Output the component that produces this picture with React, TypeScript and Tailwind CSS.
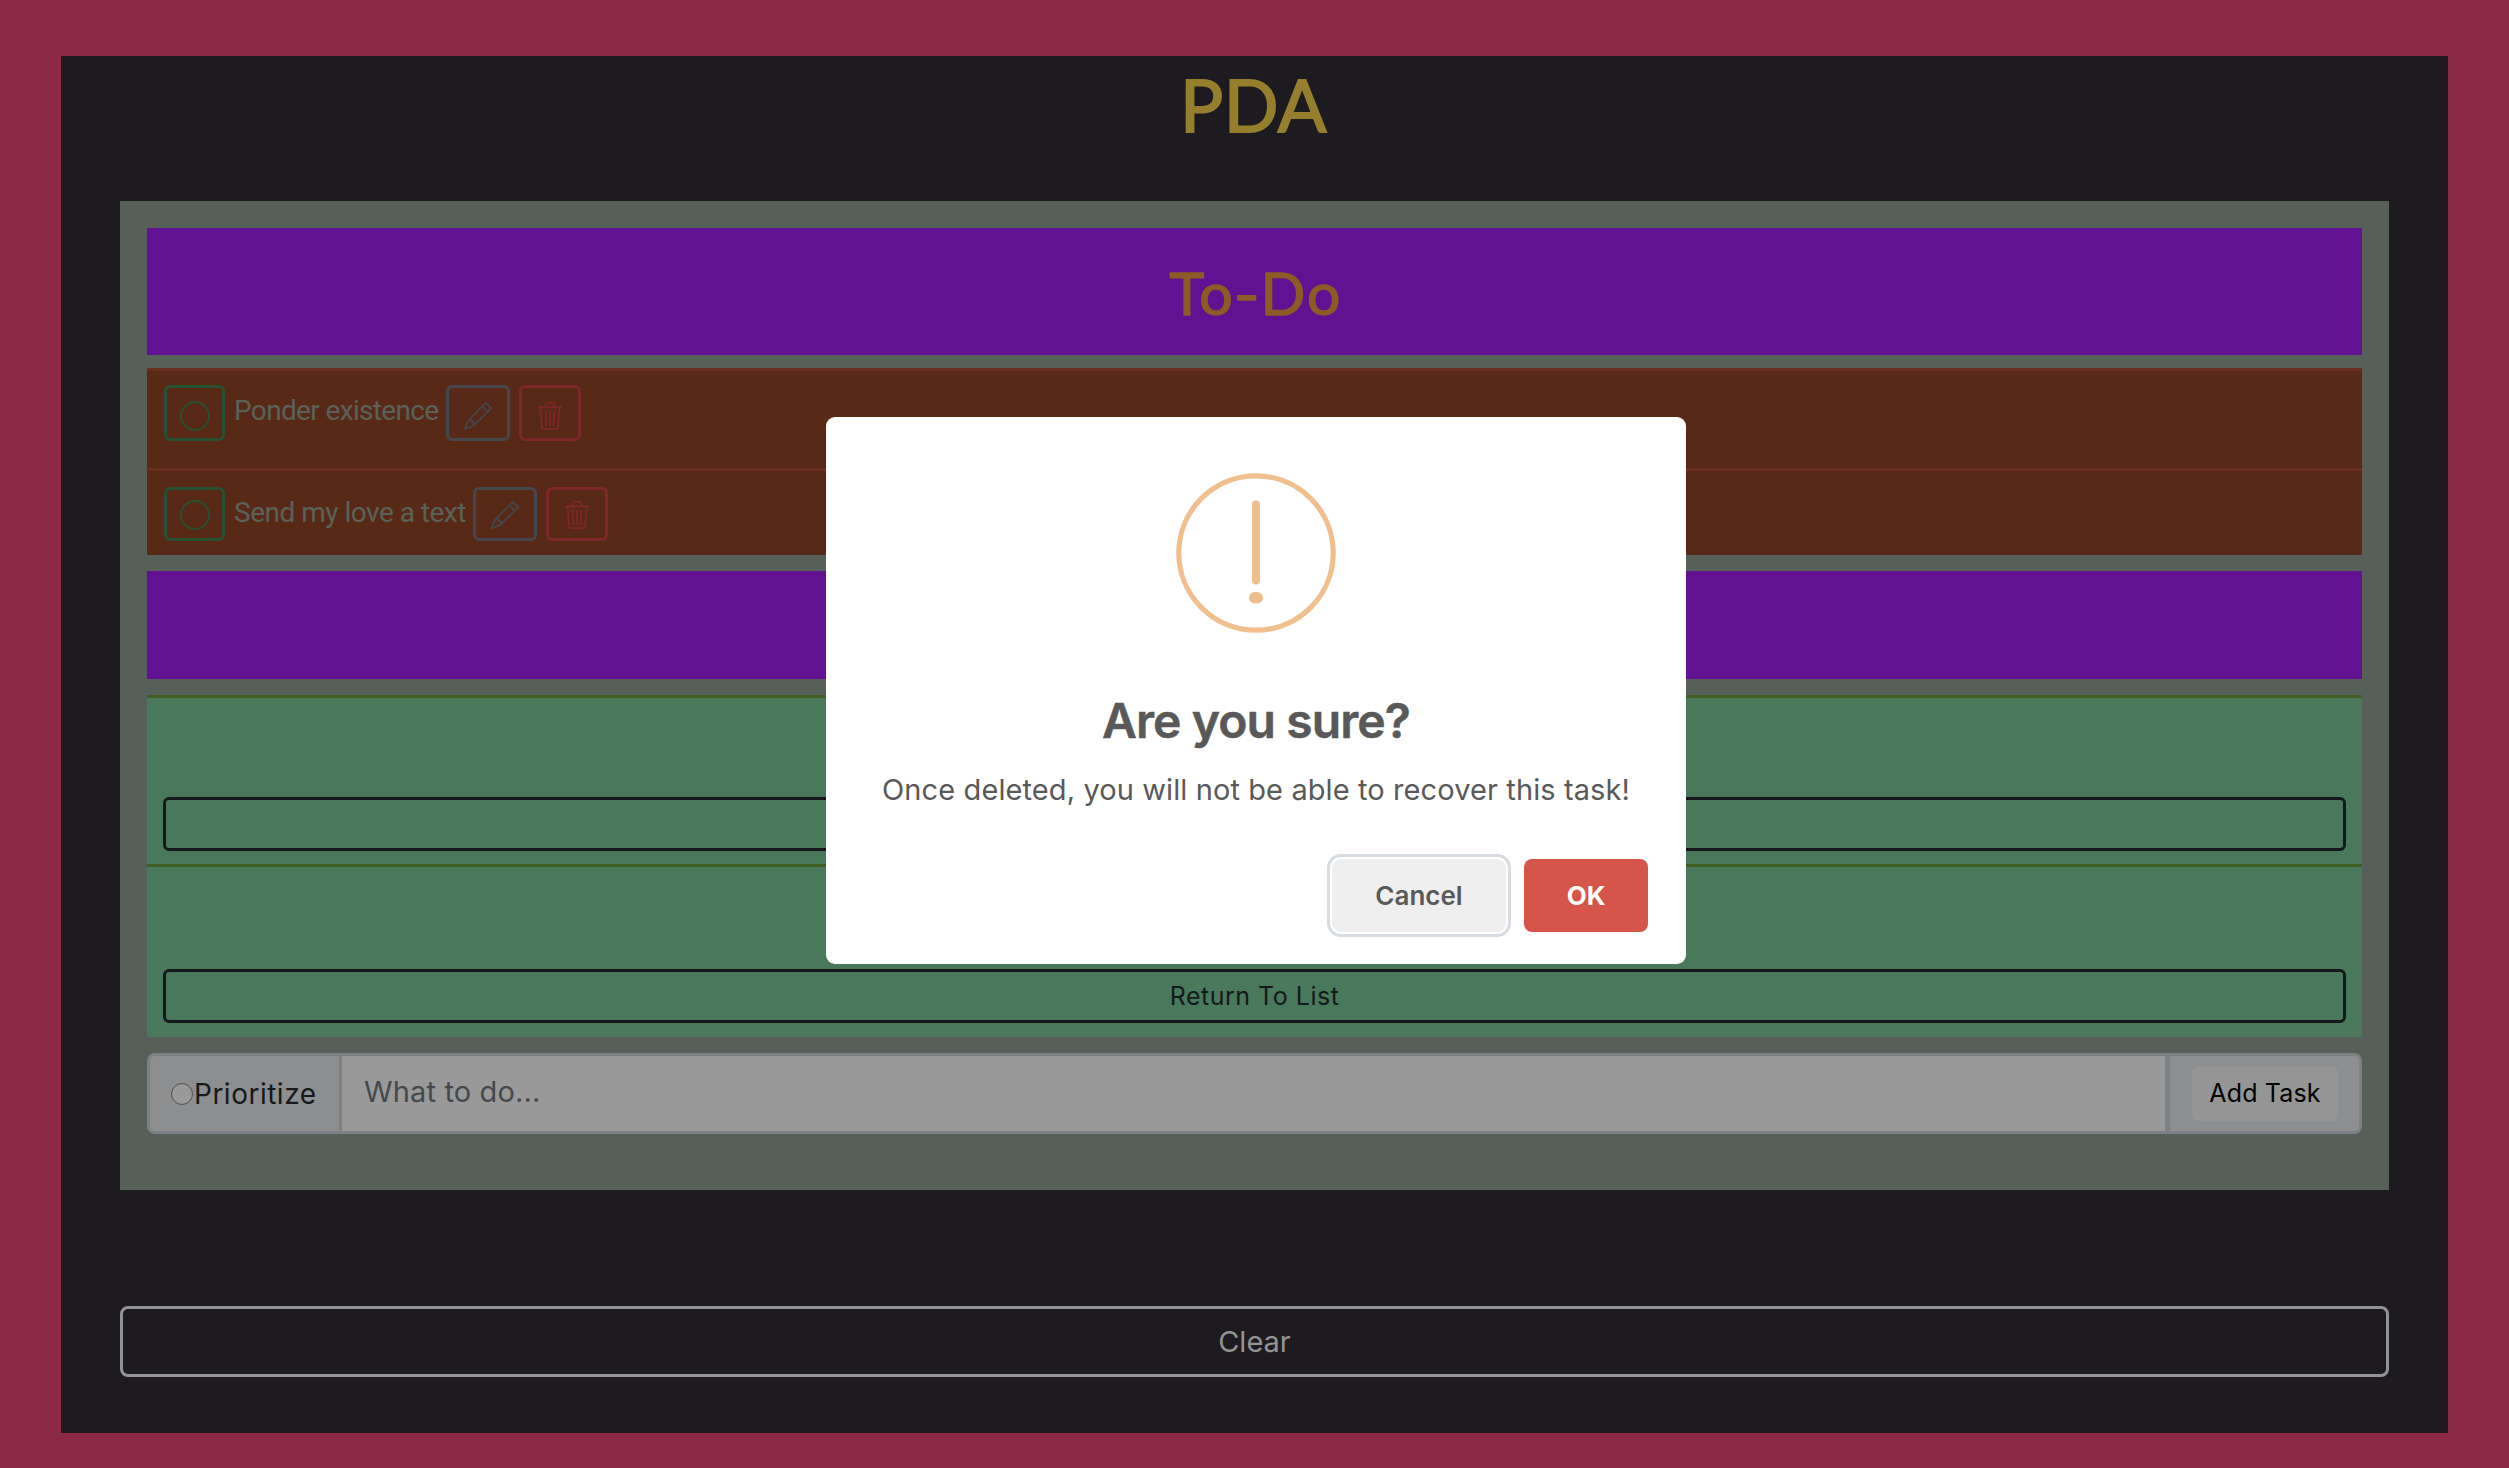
import { BsCircle, BsPencil, BsTrash3 } from "react-icons/bs";

type Task = { text: string; rowClass: string; buttonClass: string; iconClass: string; textClass: string };

const tasks: Task[] = [
  { text: "Ponder existence", rowClass: "h-[100px] pt-[14px]", buttonClass: "h-[56px]", iconClass: "mt-[5px]", textClass: "w-[203px] tracking-[-0.65px]" },
  { text: "Send my love a text", rowClass: "h-[87px] pt-[16px]", buttonClass: "h-[54px]", iconClass: "mt-[2px]", textClass: "w-[230px] tracking-[-0.5px]" },
];

function TaskRow({ task }: { task: Task }) {
  return (
    <li className={`flex items-start border-t-3 border-[#6b2f1f] pl-[17px] ${task.rowClass}`}>
      <button className={`flex w-[61px] items-center justify-center rounded-md border-[3px] border-[#265233] text-[#265233] ${task.buttonClass}`}>
        <BsCircle className={`size-[30px] shrink-0 ${task.iconClass}`} />
      </button>
      <span className="ml-[9px] mt-[8px] whitespace-nowrap font-[Roboto] text-[28px] leading-[36px] text-[#596258]">
        <span className={`block ${task.textClass}`}>{task.text}</span>
      </span>
      <button className={`ml-[9px] flex w-[64px] items-center justify-center rounded-md border-[3px] border-[#44474b] text-[#44474b] ${task.buttonClass}`}>
        <BsPencil className={`size-[28px] shrink-0 ${task.iconClass}`} />
      </button>
      <button className={`ml-[9px] flex w-[62px] items-center justify-center rounded-md border-[3px] border-[#7e272d] text-[#7e272d] ${task.buttonClass}`}>
        <BsTrash3 className={`size-[28px] shrink-0 ${task.iconClass}`} />
      </button>
    </li>
  );
}

function ConfirmDialog() {
  return (
    <div role="dialog" className="absolute left-[826px] top-[417px] flex h-[547px] w-[860px] flex-col items-center rounded-[9px] bg-white text-[#595959]">
      <svg viewBox="0 0 160 160" className="mt-[56px] size-[160px] shrink-0">
        <circle cx="80" cy="80" r="77.2" fill="none" stroke="#f1bf8d" strokeWidth="5.2" />
        <rect x="76" y="27.5" width="8" height="84" rx="4" fill="#f0bd8e" />
        <rect x="73" y="119" width="14" height="11.5" rx="5.7" fill="#f0bd8e" />
      </svg>
      <h2 className="mt-[56px] text-[48px] font-semibold leading-[64px] tracking-[-0.9px] [-webkit-text-stroke:0.5px_#595959]">Are you sure?</h2>
      <p className="mt-[17px] whitespace-nowrap text-[29px] leading-[40px] tracking-[0.1px]">Once deleted, you will not be able to recover this task!</p>
      <div className="mt-[49px] flex w-full justify-end gap-[18px] pr-[38px]">
        <button className="h-[73px] w-[174px] rounded-[9px] bg-[#efefef] text-[26px] font-semibold shadow-[0_0_0_2px_#fff,0_0_0_5px_#d7dce2]">Cancel</button>
        <button className="h-[73px] w-[124px] rounded-[8px] bg-[#d6554a] text-[26px] font-bold text-white">OK</button>
      </div>
    </div>
  );
}

export default function App() {
  return (
    <div className="relative h-[1468px] w-[2509px] overflow-hidden bg-[#8b2946] px-[61px] pt-[56px] font-[Inter,sans-serif]">
      <main className="flex h-[1377px] flex-col bg-[#1d1a20] px-[59px]">
        <h1 className="h-[145px] pr-[2px] pt-[10px] text-center font-[Lato] text-[72px] leading-[76px] tracking-[0.5px] text-[#957f2d] [-webkit-text-stroke:1.8px_#957f2d]">PDA</h1>
        <section className="flex h-[989px] shrink-0 flex-col bg-[#576058] px-[27px] pt-[27px]">
          <h2 className="h-[127px] bg-[#611191] pl-[3px] pt-[32px] text-center font-[Lato] text-[59px] leading-[66px] tracking-[2px] text-[#8e5a26] [-webkit-text-stroke:1.4px_#8e5a26]">
            To<span className="mx-[1px] inline-block scale-x-120">-</span>Do
          </h2>
          <ul className="mt-[13px] bg-[#582916]">
            {tasks.map((task) => (
              <TaskRow key={task.text} task={task} />
            ))}
          </ul>
          <div className="mt-[16px] h-[108px] bg-[#611191]" />
          <ul className="mt-[16px] bg-[#4a785b] text-[25px] tracking-[0.5px] text-[#15191b]">
            <li className="h-[169px] border-t-3 border-[#415f21] px-[16px] pt-[99px]">
              <button className="block h-[54px] w-full rounded-[6px] border-[3px] border-[#15191b] pt-px">Return To List</button>
            </li>
            <li className="h-[173px] border-t-3 border-[#415f21] px-[16px] pt-[102px]">
              <button className="block h-[54px] w-full rounded-[6px] border-[3px] border-[#15191b] pt-px">Return To List</button>
            </li>
          </ul>
          <div className="mt-[16px] flex h-[81px] overflow-hidden rounded-[8px] border-[3px] border-[#7d8084] bg-[#8d8e90]">
            <label className="flex w-[189px] items-center pl-[21px] text-[28px] tracking-[0.5px] text-[#15191b]">
              <span className="size-[22px] shrink-0 rounded-full border-[1.5px] border-[#505050] bg-[#999]" />
              <span className="ml-[1px] mt-[1px]">Prioritize</span>
            </label>
            <div className="flex flex-1 items-center border-l-3 border-r-5 border-[#7d8084] bg-[#999] pl-[22px] pb-[3px] text-[29px] tracking-[0.15px] text-[#44494e]">What to do...</div>
            <div className="flex w-[189px] items-center pl-[22px]">
              <button className="h-[54px] w-[146px] rounded-[6px] bg-[#959595] text-[25px] tracking-[0.15px] text-black">Add Task</button>
            </div>
          </div>
        </section>
        <button className="mt-[116px] h-[71px] w-full shrink-0 rounded-[8px] border-[3px] border-[#949394] text-[29px] text-[#949394]">Clear</button>
      </main>
      <ConfirmDialog />
    </div>
  );
}
